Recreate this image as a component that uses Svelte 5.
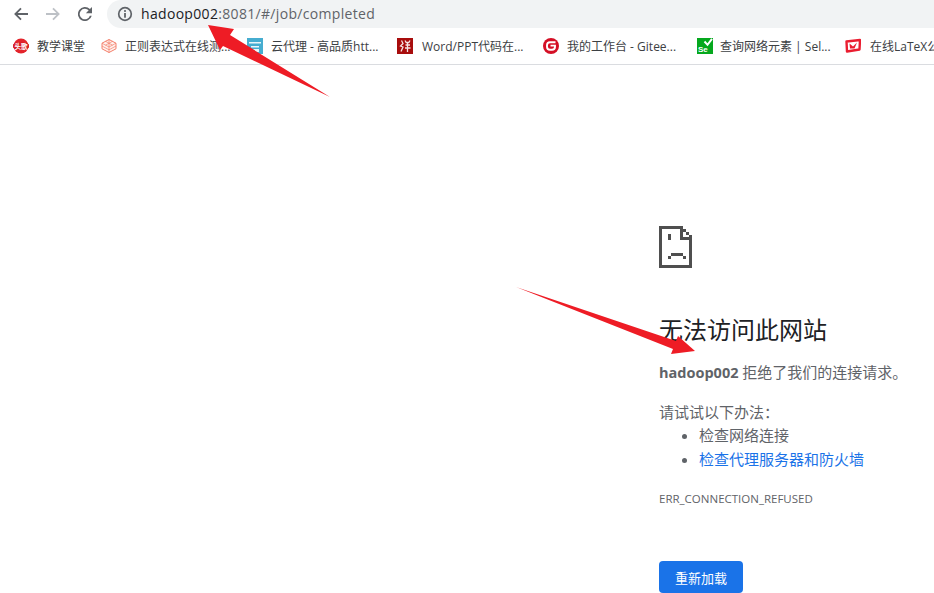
<script>
  const bookmarks = [
    { id: 'toutiao', label: '教学课堂', width: 88, gap: 8 },
    { id: 'cube', label: '正则表达式在线测...', width: 146, gap: 8 },
    { id: 'cloud', label: '云代理 - 高品质htt...', width: 150, gap: 8 },
    { id: 'word', label: 'Word/PPT代码在...', width: 146, gap: 9 },
    { id: 'gitee', label: '我的工作台 - Gitee...', width: 154, gap: 8 },
    { id: 'selenium', label: '查询网络元素 | Sel...', width: 148, gap: 7 },
    { id: 'latex', label: '在线LaTeX公', width: 89, gap: 9 }
  ];
</script>

<div class="page">
  <header class="toolbar">
    <div class="nav">
      <svg class="navicon" viewBox="0.5 0.5 15 15"><path d="M15.500 7H4.400l4.300-4.300L7.300 1.300 .6 8l6.700 6.700 1.400-1.400L4.400 9h11.100z" fill="#5f6368"/></svg>
      <svg class="navicon" viewBox="0.5 0.5 15 15"><path d="M.5 7h11.100L7.300 2.700l1.400-1.400L15.400 8l-6.700 6.700-1.400-1.400L11.600 9H.5z" fill="#bdc1c6"/></svg>
      <svg class="navicon" viewBox="0 0 16 16"><path d="M13.600 2.400A8 8 0 1 0 15.700 10h-2.100a6 6 0 1 1-1.400-6.200L9 7h7V0z" fill="#5f6368"/></svg>
    </div>
    <div class="omnibox">
      <svg class="info" viewBox="0 0 16 16"><circle cx="8" cy="8" r="6.300" fill="none" stroke="#5f6368" stroke-width="1.700"/><rect x="7.100" y="7" width="1.800" height="4.700" fill="#5f6368"/><rect x="7.100" y="4.100" width="1.800" height="1.800" fill="#5f6368"/></svg>
      <span class="url"><span class="host">hadoop002</span>:8081/#/job/completed</span>
    </div>
  </header>

  <nav class="bookmarks">
    {#each bookmarks as b}
      <div class="bookmark" style="width:{b.width}px;gap:{b.gap}px">
        <svg class="favicon" viewBox="0 0 16 16">
          {#if b.id === 'toutiao'}
            <circle cx="8" cy="8" r="7.500" fill="#e3242b"/>
            <path d="M0 6.500 2.500 4.500h11l2.500 2v3l-2.500 2h-11L0 9.500z" fill="#d81e25"/>
            <text x="8" y="10.800" class="tt">头歌</text>
          {:else if b.id === 'cube'}
            <path d="M8 1.500 15 5.200v5.600L8 14.500 1 10.800V5.200z" fill="#fff1ed" stroke="#f4806c" stroke-width="1"/>
            <path d="M1 5.200 8 9l7-3.800M8 1.500V14.500M4.500 3.300 11.500 7.200M11.500 3.300 4.500 7.200M1 8l7 3.800L15 8" stroke="#f4806c" stroke-width=".7" fill="none"/>
          {:else if b.id === 'cloud'}
            <rect width="16" height="16" fill="#46add0"/>
            <path d="M2 4h12v1.600H2zM4 8h8v1.500H4zM5.500 11h6.500v3H5.500z" fill="#eaf6fa"/>
          {:else if b.id === 'word'}
            <rect width="16" height="16" fill="#a80d0d"/>
            <path d="M4.500 2.500 6 5.500 3.500 8l2.500 1-2 4.500M8 2.500l1.200 2h2.600l1.200-2M8.500 7h4.500M8 10h5.500M10.500 4.500V14" stroke="#f5e4e4" stroke-width="1.300" fill="none"/>
          {:else if b.id === 'gitee'}
            <circle cx="8" cy="8" r="8" fill="#d40f25"/>
            <path d="M12.500 4.200H7A3 3 0 0 0 4 7.200v1.600a3 3 0 0 0 3 3h2a3 3 0 0 0 3-3V7.600H7.500" stroke="#fff" stroke-width="1.900" fill="none"/>
          {:else if b.id === 'selenium'}
            <rect width="16" height="16" fill="#05a81e"/>
            <path d="M7.500 3.500 10.500 6.800 15 .8" stroke="#fff" stroke-width="2" fill="none"/>
            <text x="1" y="14" class="se">Se</text>
          {:else}
            <path d="M1.500 3.500 15 2l-.5 9.500L2 13.500z" fill="#fff" stroke="#ea1d30" stroke-width="2.400" stroke-linejoin="round"/>
            <path d="M4.500 5.500 8 8.500 12 4.500 9.500 10.500H5z" fill="#ea1d30"/>
          {/if}
        </svg>
        <span class="label">{b.label}</span>
      </div>
    {/each}
  </nav>

  <main class="content">
    <div class="error">
      <svg class="sad" viewBox="0 0 33 42" shape-rendering="crispEdges" fill="#4f4f4f">
        <rect x="0" y="0" width="3" height="42"/>
        <rect x="0" y="0" width="24" height="3"/>
        <rect x="0" y="39" width="33" height="3"/>
        <rect x="30" y="12" width="3" height="30"/>
        <rect x="21" y="0" width="3" height="14"/>
        <rect x="21" y="11" width="12" height="3"/>
        <rect x="24" y="3" width="3" height="3"/>
        <rect x="27" y="6" width="3" height="3"/>
        <rect x="30" y="9" width="3" height="3"/>
        <rect x="9" y="8" width="3" height="6"/>
        <rect x="12" y="27" width="12" height="3"/>
        <rect x="9" y="30" width="3" height="3"/>
        <rect x="24" y="30" width="3" height="3"/>
      </svg>
      <h1>无法访问此网站</h1>
      <p class="reason"><strong>hadoop002</strong> 拒绝了我们的连接请求。</p>
      <p class="try">请试试以下办法：</p>
      <ul>
        <li>检查网络连接</li>
        <li><span class="link">检查代理服务器和防火墙</span></li>
      </ul>
      <div class="code">ERR_CONNECTION_REFUSED</div>
      <button>重新加载</button>
    </div>
  </main>

  <svg class="arrows" viewBox="0 0 934 593">
    <polygon points="208,25 234,29 230,35 330,97 223,46 220,50" fill="#ee1c25"/>
    <polygon points="516,287 676,341 678,336 695,351 671,354 673,349" fill="#ee1c25"/>
  </svg>
</div>

<style>
  :global(body) {
    margin: 0;
    background: #fff;
    overflow: hidden;
  }
  .page {
    position: relative;
    width: 934px;
    height: 593px;
    overflow: hidden;
    font-family: "Open Sans", "Noto Sans CJK SC", sans-serif;
  }
  .toolbar {
    display: flex;
    height: 28px;
  }
  .nav {
    display: flex;
    align-items: center;
    gap: 18px;
    width: 107px;
    padding: 0 0 0 14px;
    box-sizing: border-box;
    height: 28px;
  }
  .navicon {
    width: 14px;
    height: 14px;
    flex: none;
  }
  .omnibox {
    flex: 1;
    display: flex;
    align-items: center;
    background: #f1f3f4;
    border-radius: 14px 0 0 14px;
    padding-left: 10px;
    gap: 8px;
  }
  .info {
    width: 16px;
    height: 16px;
    flex: none;
  }
  .url {
    font-size: 14px;
    color: #5f6368;
    letter-spacing: 0.32px;
    white-space: nowrap;
    padding-bottom: 2px;
  }
  .host {
    color: #202124;
  }
  .bookmarks {
    display: flex;
    align-items: center;
    height: 36px;
    padding-left: 13px;
    border-bottom: 1px solid #dadce0;
    overflow: hidden;
  }
  .bookmark {
    display: flex;
    align-items: center;
    flex: none;
    white-space: nowrap;
  }
  .favicon {
    width: 16px;
    height: 16px;
    flex: none;
  }
  .se {
    font: bold 8px "Liberation Sans", sans-serif;
    fill: #fff;
  }
  .tt {
    font: 700 6.500px "Noto Sans CJK SC", sans-serif;
    fill: #fff;
    text-anchor: middle;
  }
  .label {
    font-size: 12px;
    color: #3c4043;
  }
  .content {
    padding-left: 659px;
  }
  .error {
    width: 275px;
    padding-top: 161px;
    color: #5f6368;
    font-size: 15px;
  }
  .sad {
    display: block;
    width: 33px;
    height: 42px;
  }
  h1 {
    margin: 44px 0 0;
    font-size: 24px;
    font-weight: 400;
    line-height: 36px;
    color: #202124;
    white-space: nowrap;
  }
  .reason {
    margin: 12px 0 0;
    line-height: 24px;
    white-space: nowrap;
  }
  .reason strong {
    font-size: 14.500px;
  }
  .try {
    margin: 15px 0 0;
    line-height: 24px;
  }
  ul {
    margin: 0;
    padding: 0 0 0 40px;
  }
  li {
    line-height: 23.500px;
    color: #5f6368;
  }
  .link {
    color: #1a73e8;
  }
  .code {
    margin-top: 20px;
    font-size: 11.500px;
    line-height: 16px;
  }
  button {
    display: block;
    margin-top: 54px;
    width: 84px;
    height: 32px;
    border: 0;
    border-radius: 4px;
    background: #1a73e8;
    color: #fff;
    font: inherit;
    font-size: 13px;
    padding: 0;
  }
  .arrows {
    position: absolute;
    inset: 0;
    width: 934px;
    height: 593px;
    pointer-events: none;
  }
</style>
